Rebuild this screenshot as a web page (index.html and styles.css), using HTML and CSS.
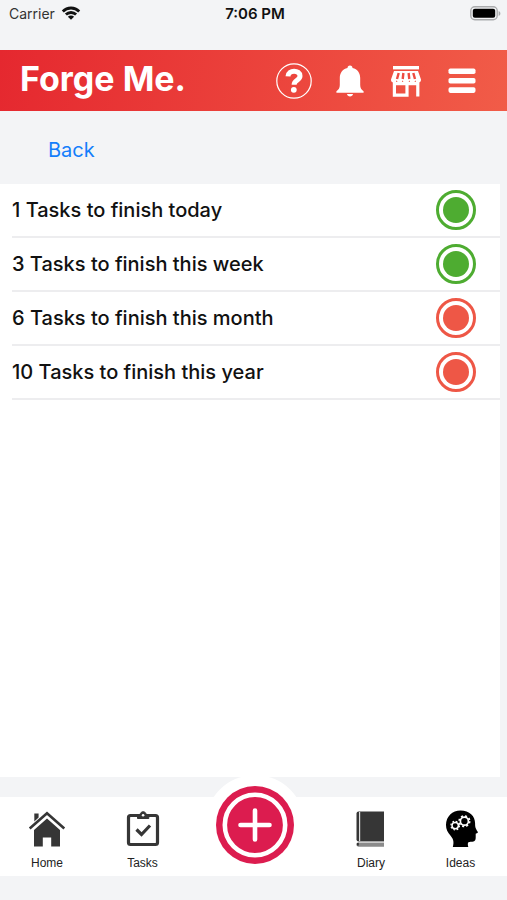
FILE: index.html
```html
<!DOCTYPE html>
<html lang="en">
<head>
<meta charset="utf-8">
<meta name="viewport" content="width=device-width, initial-scale=1">
<title>Forge Me.</title>
<link rel="stylesheet" href="styles.css">
</head>
<body>
<div class="status">
  <div class="carrier">
    <span>Carrier</span>
    <svg width="20" height="14" viewBox="0 0 20 14" aria-hidden="true">
      <g fill="none" stroke="#111" stroke-width="2.8">
        <path d="M1.800 5.400a11.600 11.600 0 0 1 16.400 0"/>
        <path d="M4.900 8.600a7.200 7.200 0 0 1 10.200 0"/>
      </g>
      <path d="M10 13.800 6.900 10.700a4.400 4.400 0 0 1 6.200 0z" fill="#111"/>
    </svg>
  </div>
  <time class="clock">7:06 PM</time>
  <div class="battery">
    <svg width="31" height="15" viewBox="0 0 31 15" aria-hidden="true">
      <rect x="0.800" y="0.800" width="26.400" height="13" rx="4" fill="#f4f5f7" stroke="#aaabad" stroke-width="1.400"/>
      <rect x="2.800" y="2.800" width="22.400" height="9" rx="2" fill="#000"/>
      <path d="M28.600 5v5c2.400-.8 2.400-4.200 0-5z" fill="#aaabad"/>
    </svg>
  </div>
</div>

<header class="header">
  <h1 class="brand">Forge Me.</h1>
  <div class="actions">
    <button type="button" class="action" aria-label="Help">
      <svg width="36" height="36" viewBox="0 0 36 36">
        <circle cx="18" cy="18" r="17.200" fill="none" stroke="#fff" stroke-width="1.200"/>
        <path d="M12 13.400C12.200 6.400 24 6.600 24 13c0 4.300-5.900 4.200-5.900 8.700" fill="none" stroke="#fff" stroke-width="5"/>
        <circle cx="17.800" cy="26.800" r="2.900" fill="#fff"/>
      </svg>
    </button>
    <button type="button" class="action" aria-label="Notifications">
      <svg width="28" height="32" viewBox="0 0 28 32" fill="#fff">
        <path d="M14 0.500c1.600 0 2.500 1 2.500 2.600C21.500 4.300 24.200 8 24.200 13v7c0 3.200 1.200 4.800 3.400 6.200v1.500H.4v-1.500C2.600 24.800 3.800 23.200 3.800 20v-7c0-5 2.700-8.700 7.700-9.900C11.500 1.500 12.400.5 14 .5z"/>
        <path d="M11 29h6c-.2 3.300-5.800 3.300-6 0z"/>
      </svg>
    </button>
    <button type="button" class="action" aria-label="Store">
      <svg width="32" height="32" viewBox="0 0 32 32">
        <path d="M3 1h26v3.400H3z" fill="#fff"/>
        <path d="M4 6h24l3 8.400a2.600 2.600 0 0 1-5.800.3 2.900 2.900 0 0 1-5.800 0 3.400 2.900 0 0 1-6.800 0 2.900 2.900 0 0 1-5.800 0A2.600 2.600 0 0 1 1 14.400z" fill="#fff"/>
        <path d="M8.700 8 7 14M13.400 8l-.7 6M18.600 8l.7 6M23.300 8l1.700 6" stroke="#ee4b41" stroke-width="2.400"/>
        <path d="M4.400 16v14.200H17V19M4.400 18.600h23.800M27.800 16v15.600" fill="none" stroke="#fff" stroke-width="3.200"/>
      </svg>
    </button>
    <button type="button" class="action" aria-label="Menu">
      <svg width="28" height="26" viewBox="0 0 28 26" fill="#fff">
        <rect x="0.500" y="0.500" width="27" height="5.600" rx="1.800"/>
        <rect x="0.500" y="9.900" width="27" height="5.600" rx="1.800"/>
        <rect x="0.500" y="19.300" width="27" height="5.600" rx="1.800"/>
      </svg>
    </button>
  </div>
</header>

<main class="main">
  <div class="back-bar"><a class="back" href="#">Back</a></div>
  <ul class="list">
    <li class="row"><span>1 Tasks to finish today</span><span class="dot dot-green"></span></li>
    <li class="row"><span>3 Tasks to finish this week</span><span class="dot dot-green"></span></li>
    <li class="row"><span>6 Tasks to finish this month</span><span class="dot dot-red"></span></li>
    <li class="row"><span>10 Tasks to finish this year</span><span class="dot dot-red"></span></li>
  </ul>
</main>

<nav class="nav">
  <a class="tab" href="#">
    <svg width="38" height="38" viewBox="0 0 38 38">
      <path d="M6.300 3.500h4.300v4L6.300 11.500z" fill="#363636"/>
      <path d="M19 8.500 32 20v16.500h-8.800v-9h-8.400v9H6V20z" fill="#363636"/>
      <path d="M1.700 18.500 19 3.200l17.300 15.300" fill="none" stroke="#363636" stroke-width="2.600"/>
    </svg>
    <span>Home</span>
  </a>
  <a class="tab" href="#">
    <svg width="38" height="38" viewBox="0 0 38 38" fill="none" stroke="#363636">
      <rect x="4.500" y="5.500" width="29" height="29" rx="2" stroke-width="3.200"/>
      <path d="M13.500 8.500V5h2.500c.3-4.400 6-4.400 6.300 0h2.500v3.500z" fill="#363636" stroke-width="1"/>
      <circle cx="19.100" cy="5.200" r="1.300" fill="#fff" stroke="none"/>
      <path d="m12.500 19.500 5 5 8.500-9" stroke-width="3.200"/>
    </svg>
    <span>Tasks</span>
  </a>
  <div class="add-slot">
    <button type="button" class="add" aria-label="Add">
      <svg width="78" height="78" viewBox="0 0 78 78">
        <circle cx="39" cy="39" r="39" fill="#dc1c4f"/>
        <circle cx="39" cy="39" r="30.200" fill="none" stroke="#fff" stroke-width="4.600"/>
        <path d="M39 24.500v29M24.500 39h29" stroke="#fff" stroke-width="4.600" stroke-linecap="round"/>
      </svg>
    </button>
  </div>
  <a class="tab" href="#">
    <svg width="38" height="38" viewBox="0 0 38 38">
      <path d="M6.500 1.500H32v30H6.500a2 2 0 0 1-2-2v-26a2 2 0 0 1 2-2z" fill="#363636"/>
      <path d="M7.600 2v29" stroke="#ddd" stroke-width="1.200"/>
      <path d="M6.500 32H32v4.800H6.500c-2.600-.8-2.600-4 0-4.800z" fill="#8b8b8b"/>
      <path d="M6.500 32.300H32" stroke="#ddd" stroke-width="1"/>
      <path d="M5.800 33v2.600" stroke="#333" stroke-width="2"/>
    </svg>
    <span>Diary</span>
  </a>
  <a class="tab" href="#">
    <svg width="38" height="38" viewBox="0 0 38 38">
      <path d="M10.800 37c1.400-5 .5-8-2-11C5.500 22.400 4 19 4 15 4 6.400 10.400.5 18.500.5c9 0 14.600 5.500 14.600 13 0 3.200.2 4.500 2.600 8.300.5 1-.3 1.500-2 2v3.700c0 3.200-1.300 4.200-4.200 4.200-3 0-4.500.3-3.200 5.300z" fill="#000"/>
      <g fill="none" stroke="#fff">
        <circle cx="22.400" cy="11.200" r="4" stroke-width="1.700"/>
        <circle cx="22.400" cy="11.200" r="5.300" stroke-width="1.600" stroke-dasharray="2.080 2.080"/>
        <circle cx="13.200" cy="15.600" r="3.200" stroke-width="1.500"/>
        <circle cx="13.200" cy="15.600" r="4.300" stroke-width="1.200" stroke-dasharray="1.690 1.690"/>
      </g>
    </svg>
    <span>Ideas</span>
  </a>
</nav>
</body>
</html>
```
FILE: styles.css
```css
* { box-sizing: border-box; }

body {
  margin: 0;
  min-height: 100vh;
  display: flex;
  flex-direction: column;
  background: #f3f4f6;
  color: #111;
  font-family: Inter, "Liberation Sans", sans-serif;
}

button {
  padding: 0;
  border: 0;
  background: none;
  cursor: pointer;
}

svg { display: block; }

.status {
  display: grid;
  grid-template-columns: 1fr auto 1fr;
  align-items: center;
  height: 50px;
  padding: 0 6px 24px 9px;
  font-size: 14px;
}

.carrier {
  display: flex;
  align-items: center;
  gap: 6px;
  color: #333;
}

.clock {
  font-size: 15px;
  font-weight: 600;
}

.battery { justify-self: end; }

.header {
  display: flex;
  align-items: center;
  justify-content: space-between;
  height: 61px;
  padding: 0 23px 0 20px;
  background: linear-gradient(100deg, #e5282f, #f15c48);
}

.brand {
  margin: 0;
  padding-bottom: 4px;
  color: #fff;
  font-size: 34px;
  font-weight: 700;
  line-height: 40px;
}

.actions {
  display: flex;
  gap: 12px;
}

.action {
  display: grid;
  place-items: center;
  width: 44px;
  height: 44px;
}

.main {
  flex: 1;
  display: flex;
  flex-direction: column;
}

.back-bar {
  display: flex;
  align-items: center;
  height: 73px;
  padding: 4px 48px 0;
}

.back {
  color: #147efb;
  font-size: 20px;
  text-decoration: none;
}

.list {
  flex: 1;
  margin: 0 7px 20px 0;
  padding: 0 0 0 12px;
  background: #fff;
  list-style: none;
}

.row {
  display: flex;
  align-items: center;
  justify-content: space-between;
  height: 54px;
  padding-right: 24px;
  border-bottom: 2px solid #ededef;
  color: #111;
  font-size: 20px;
  font-weight: 500;
}

.dot {
  width: 40px;
  height: 40px;
  padding: 4px;
  border: 3px solid;
  border-radius: 50%;
  background: currentColor content-box;
}

.dot-green { color: #4eac31; }
.dot-red { color: #ee5746; }

.nav {
  display: grid;
  grid-template-columns: 94fr 97fr 127fr 106fr 73fr;
  height: 79px;
  margin-bottom: 24px;
  padding-right: 10px;
  background: #fff;
}

.tab {
  display: flex;
  flex-direction: column;
  align-items: center;
  gap: 8px;
  padding-top: 13px;
  color: #222;
  font-family: "Liberation Sans", sans-serif;
  font-size: 12px;
  line-height: 14px;
  text-decoration: none;
}

.add-slot {
  display: grid;
  justify-items: center;
  align-items: start;
}

.add {
  margin-top: -22px;
  padding: 11px;
  border-radius: 50%;
  background: #fff;
}
```
